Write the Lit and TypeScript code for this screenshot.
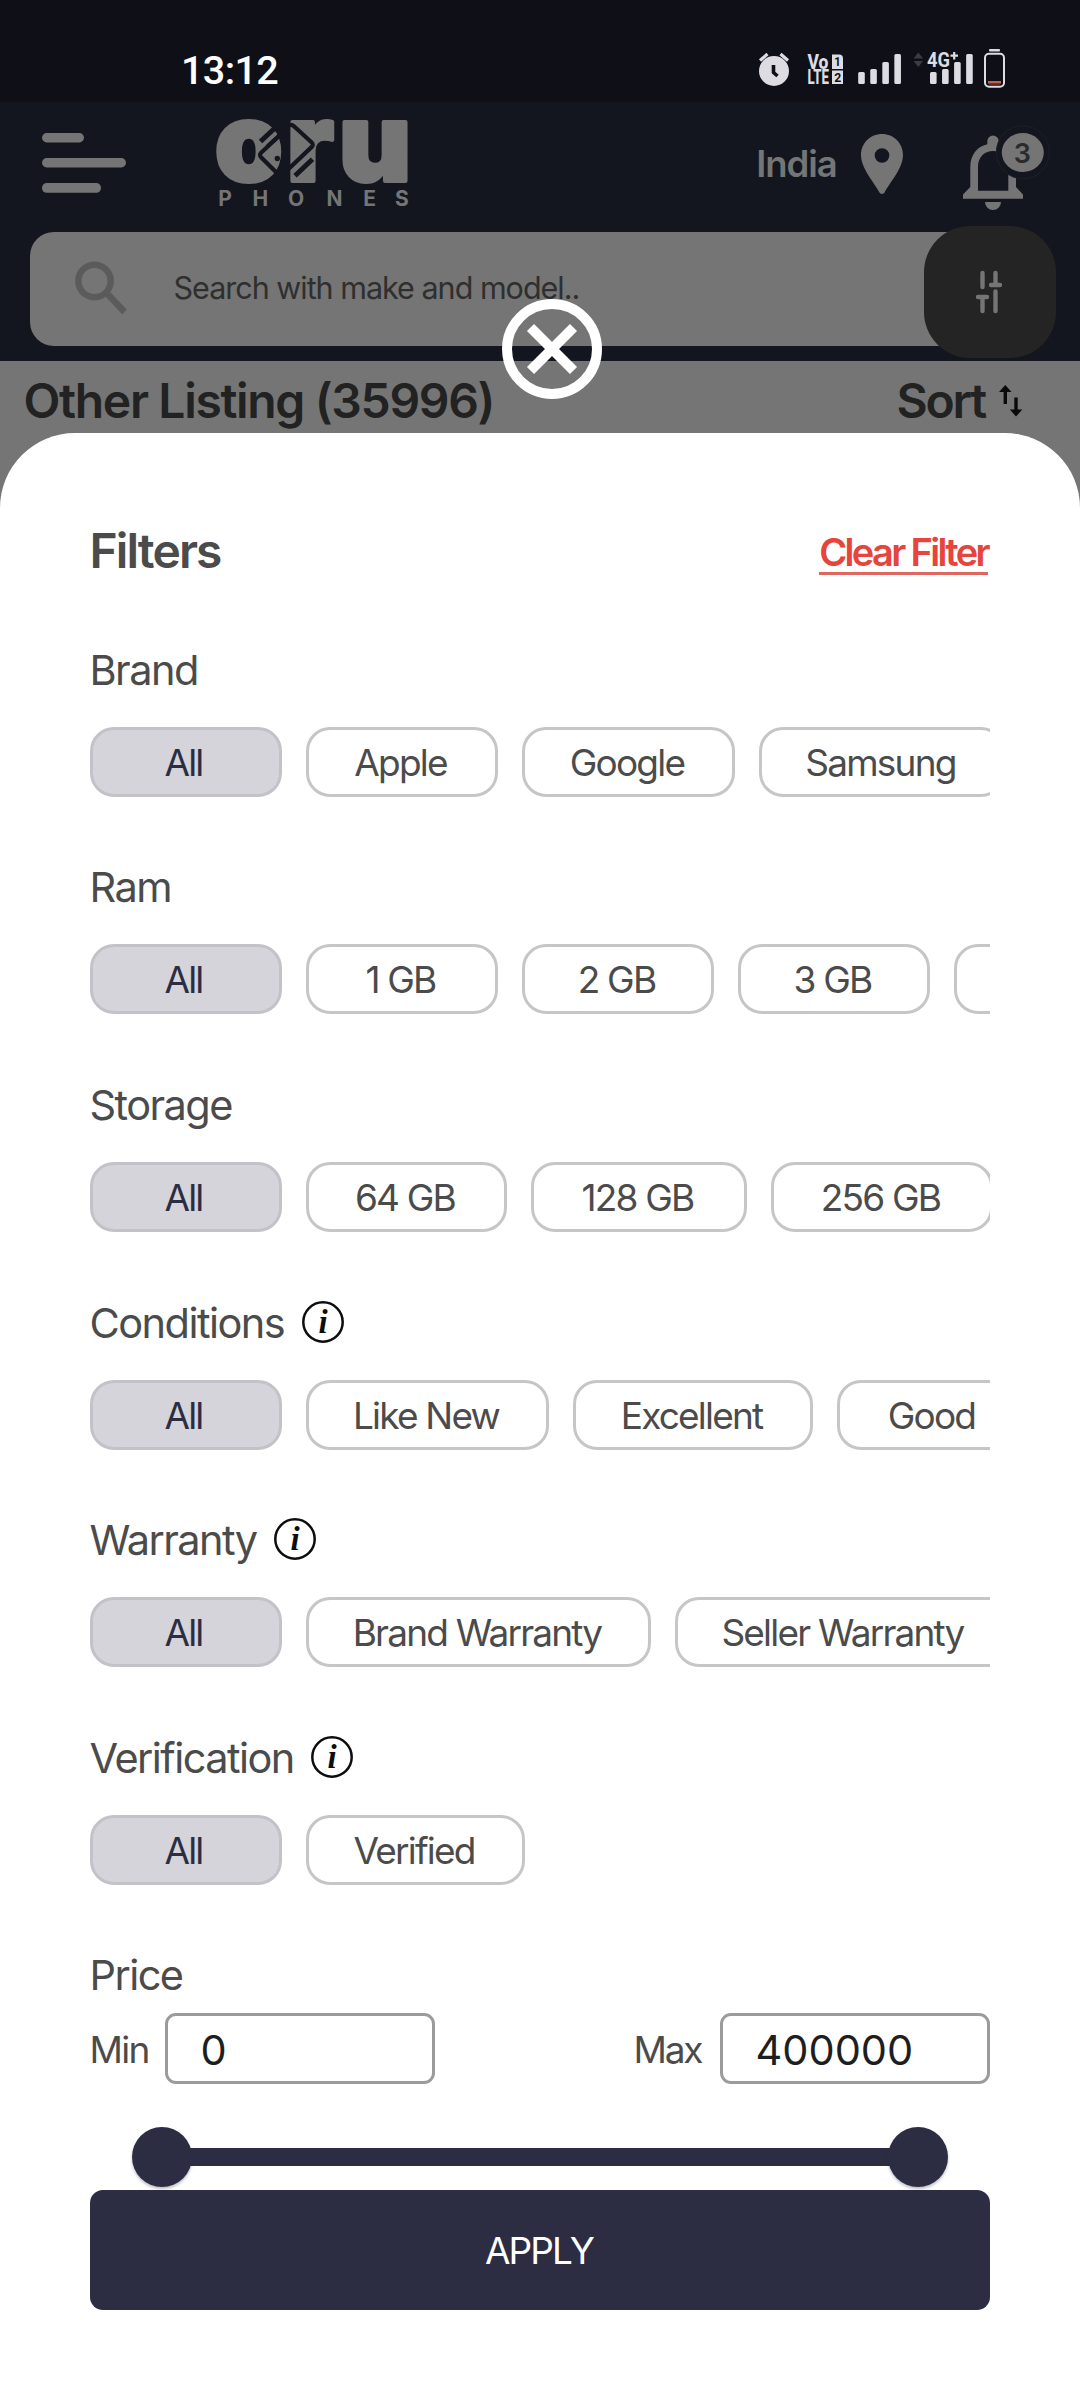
import { LitElement, html, css, svg, nothing } from "lit";
import { classMap } from "lit/directives/class-map.js";
import { styleMap } from "lit/directives/style-map.js";

interface Option {
  text: string;
  width: number;
}

interface FilterGroup {
  title: string;
  info: boolean;
  options: Option[];
}

const opt = (text: string, width = 192): Option => ({ text, width });

const GROUPS: FilterGroup[] = [
  { title: "Brand", info: false, options: [opt("All"), opt("Apple"), opt("Google", 213), opt("Samsung", 246)] },
  { title: "Ram", info: false, options: [opt("All"), opt("1 GB"), opt("2 GB"), opt("3 GB"), opt("")] },
  { title: "Storage", info: false, options: [opt("All"), opt("64 GB", 201), opt("128 GB", 216), opt("256 GB", 222)] },
  { title: "Conditions", info: true, options: [opt("All"), opt("Like New", 243), opt("Excellent", 240), opt("Good")] },
  { title: "Warranty", info: true, options: [opt("All"), opt("Brand Warranty", 345), opt("Seller Warranty", 338)] },
  { title: "Verification", info: true, options: [opt("All"), opt("Verified", 219)] },
];

class StatusBar extends LitElement {
  static styles = css`
    :host {
      display: flex;
      justify-content: space-between;
      height: 102px;
      box-sizing: border-box;
      padding: 46px 72px 0 181px;
      background: #0f1017;
    }
    .time {
      margin-top: 1px;
      font: 500 39.5px/48px Roboto, sans-serif;
      letter-spacing: -0.6px;
      color: #fff;
    }
    .icons { display: block; overflow: visible; }
    .vo { font: 800 20px Roboto, sans-serif; fill: #dcdce2; }
    .sim { font: 700 13px Roboto, sans-serif; fill: #0f1017; }
    .net { font: 700 21px Roboto, sans-serif; fill: #dcdce2; }
  `;

  private bars(x: number) {
    return [72, 69, 62, 54].map(
      (y, i) => svg`<rect x=${x + i * 12.05} y=${y} width="6.6" height=${84 - y} rx="1.5" />`
    );
  }

  render() {
    return html`
      <span class="time">13:12</span>
      <svg class="icons" width="252" height="46" viewBox="756 46 252 46" fill="#dcdce2">
        <circle cx="774" cy="71" r="15" />
        <path d="M760 60.500l7.500-6.500M788 60.500l-7.500-6.500" stroke="#dcdce2" stroke-width="3.200" />
        <path d="M773.500 65v7.500l4 3.500" fill="none" stroke="#0f1017" stroke-width="3.600" />
        <text class="vo" x="807.500" y="68.500" textLength="21" lengthAdjust="spacingAndGlyphs">Vo</text>
        <text class="vo" x="807.500" y="84" textLength="21.500" lengthAdjust="spacingAndGlyphs">LTE</text>
        <path d="M832 54.500h7a4 4 0 0 1 4 4v10.500h-11zM832 70.500h11V84h-11z" />
        <text class="sim" x="834.200" y="66.300" textLength="6.500" lengthAdjust="spacingAndGlyphs">1</text>
        <text class="sim" x="834.200" y="82" textLength="7" lengthAdjust="spacingAndGlyphs">2</text>
        ${this.bars(858.2)} ${this.bars(930)}
        <path d="M913.500 58.500l4.800-6 4.800 6zM913.500 61l4.800 6 4.800-6z" fill="#3b3b40" />
        <text class="net" x="927" y="67" textLength="23" lengthAdjust="spacingAndGlyphs"
          stroke="#0f1017" stroke-width="3" paint-order="stroke">4G</text>
        <path d="M950.500 55.700h7.500M954.200 52v7.500" stroke="#dcdce2" stroke-width="2.200" />
        <rect x="989" y="49" width="11" height="2.400" rx="1" />
        <rect x="985" y="53.800" width="19" height="33" rx="4" fill="none" stroke="#dcdce2" stroke-width="2" />
        <rect x="988" y="81" width="13" height="2.600" fill="#c0604e" />
        <rect x="989" y="83.600" width="11" height="1.400" fill="#5c2a25" />
      </svg>
    `;
  }
}
customElements.define("status-bar", StatusBar);

class AppHeader extends LitElement {
  static styles = css`
    :host {
      display: flex;
      flex-direction: column;
      height: 259px;
      background: #14161f;
      font-family: Inter, sans-serif;
    }
    svg { display: block; flex: none; overflow: visible; }
    .top {
      display: flex;
      height: 124px;
      box-sizing: border-box;
      padding: 0 40px 0 42px;
    }
    .menu { margin: 31px 90px 0 0; }
    .logo { margin-top: 15px; }
    .word { font: 900 108px Inter, sans-serif; }
    .sub { font: 700 21px Inter, sans-serif; }
    .place {
      display: flex;
      align-items: center;
      gap: 24.5px;
      height: 124px;
      margin-left: auto;
      font-size: 36.5px;
      font-weight: 600;
      letter-spacing: -1.1px;
      color: #757575;
    }
    .bell { margin: 20px 0 0 58px; }
    .count { font: 600 27px Inter, sans-serif; }
    .find { display: flex; }
    .box {
      display: flex;
      align-items: center;
      width: 970px;
      height: 114px;
      box-sizing: border-box;
      margin: 6px 0 0 30px;
      padding: 0 0 2px 45px;
      border-radius: 24px;
      background: #757575;
      color: #2f2f2f;
      font-size: 30.5px;
      letter-spacing: -1px;
    }
    .hint { margin: 0 0 1px 46.5px; }
    .tune {
      display: flex;
      align-items: center;
      justify-content: center;
      width: 132px;
      height: 132px;
      box-sizing: border-box;
      padding-right: 3px;
      margin-left: -76px;
      border-radius: 46px;
      background: #242424;
    }
  `;

  render() {
    return html`
      <div class="top">
        <svg class="menu" width="84" height="60" viewBox="0 0 84 60" fill="#757575">
          <rect width="42" height="9.400" rx="4.700" />
          <rect y="25" width="84" height="9.400" rx="4.700" />
          <rect y="50" width="59" height="9.800" rx="4.700" />
        </svg>
        <svg class="logo" width="194" height="91" viewBox="216 117 194 91">
          <g class="word" fill="#757575" stroke="#757575" stroke-width="4" stroke-linejoin="round">
            <text x="215" y="181">o</text>
            <text x="287" y="181">r</text>
            <text x="339" y="181" textLength="72" lengthAdjust="spacingAndGlyphs">u</text>
          </g>
          <rect x="282.300" y="117" width="7.700" height="68" fill="#14161f" />
          <g fill="none" stroke="#14161f">
            <path d="M289 125.500q2.500-1.500 5 .8l17.500 16q2.600 2.400 0 4.800L288 169.500" stroke-width="4.200" />
            <path d="M295 175.700L312.500 159.300" stroke-width="5" />
            <path d="M284 131.500L261.300 152.500q-2.600 2.500 0 5L277.500 173.500" stroke-width="4.200" />
            <path d="M260.500 141.500L284 119.500" stroke-width="5" />
            <path d="M266.500 145.500l13.500-12.500" stroke-width="1.500" />
          </g>
          <circle cx="277.300" cy="158.500" r="2.700" fill="#14161f" />
          <text class="sub" x="218.300 252.400 288 326.400 363.300 395" y="206.200" fill="#757575">PHONES</text>
        </svg>
        <div class="place">
          India
          <svg width="42" height="60" viewBox="0 0 42 60">
            <path fill="#757575" fill-rule="evenodd"
              d="M21 0C9.200 0 0 9.200 0 21c0 13.500 13 27 18.300 37.300 1.200 2.300 4.200 2.300 5.400 0C29 48 42 34.500 42 21 42 9.200 32.800 0 21 0zm0 14.200a7.300 7.300 0 1 1 0 14.600 7.300 7.300 0 0 1 0-14.600z" />
          </svg>
        </div>
        <svg class="bell" width="79" height="92" viewBox="961 122 79 92">
          <path fill="#757575" fill-rule="evenodd"
            d="M963 198.700v-4.200l7.300-7.500v-20c0-11.500 6.700-20.500 17-22.700v-3a5.700 5.700 0 0 1 11.400 0v3c10.300 2.200 17.300 11.200 17.300 22.700v20l7 7.500v4.200zM978 190.800h30.300V167c0-9.500-6-16-15.200-16s-15.100 6.500-15.100 16zM985 202h16a8 8 0 0 1-16 0z" />
          <circle cx="1022.800" cy="152.300" r="26.500" fill="#14161f" stroke="#1d1f29" stroke-width="1" />
          <ellipse cx="1022.800" cy="152.500" rx="21" ry="19.600" fill="#757575" />
          <text class="count" x="1022.300" y="163" text-anchor="middle" fill="#2b2b2e">3</text>
        </svg>
      </div>
      <div class="find">
        <div class="box">
          <svg width="52" height="54" viewBox="0 0 52 54" fill="none" stroke="#5b5b5b">
            <circle cx="19.500" cy="20" r="16.200" stroke-width="6.400" />
            <path d="M33 33.500L49.500 51" stroke-width="6.600" />
          </svg>
          <span class="hint">Search with make and model..</span>
        </div>
        <div class="tune">
          <svg width="28" height="44" viewBox="0 0 28 44" fill="none" stroke="#757575" stroke-width="4.400" stroke-linecap="round">
            <path d="M7.500 3v14M20.500 3v12M16 15h9M3 27h9M7.500 27v14M20.500 21.500V41" />
          </svg>
        </div>
      </div>
    `;
  }
}
customElements.define("app-header", AppHeader);

class FilterSheet extends LitElement {
  static styles = css`
    :host {
      display: flex;
      flex-direction: column;
      flex: 1;
      box-sizing: border-box;
      padding: 88px 90px 0;
      border-radius: 75px 75px 0 0;
      background: #fff;
      color: #4b4b4b;
      font-family: Inter, sans-serif;
    }
    .head {
      display: flex;
      justify-content: space-between;
      align-items: flex-start;
      height: 60px;
      margin-bottom: 59px;
    }
    .heading {
      margin: 0 0 0 -0.5px;
      font-size: 48px;
      font-weight: 600;
      line-height: 60px;
      letter-spacing: -1.9px;
    }
    .clear {
      margin: 11px 2px 0 0;
      border-bottom: 3px solid #e0675f;
      color: #e5453c;
      font-size: 38px;
      font-weight: 600;
      line-height: 40px;
      letter-spacing: -2.65px;
    }
    .group { height: 217.6px; }
    .label {
      display: flex;
      align-items: center;
      gap: 17.5px;
      height: 60px;
      margin-left: -0.5px;
      padding-top: 0.5px;
      box-sizing: border-box;
      font-size: 41.5px;
      letter-spacing: -1.55px;
    }
    .info { display: block; margin-bottom: 2px; }
    .i { font: italic 700 33px "Liberation Serif", serif; letter-spacing: 0; }
    .chips {
      display: flex;
      gap: 24px;
      margin-top: 27.4px;
      overflow: hidden;
    }
    .chip {
      display: flex;
      flex: none;
      align-items: center;
      justify-content: center;
      height: 70px;
      box-sizing: border-box;
      padding: 1px 3px 0 0;
      border: 3px solid #c6c6c6;
      border-radius: 24px;
      font-size: 37px;
      letter-spacing: -1.8px;
    }
    .on {
      padding-right: 5px;
      border-color: #c3c2c8;
      background: #d5d4da;
      color: #2c2d42;
    }
    .price {
      display: grid;
      grid-template-columns: 75px 270px 1fr 85px 270px;
      align-items: center;
      margin-top: 8.4px;
      font-size: 37px;
      letter-spacing: -1.9px;
    }
    .min { margin-left: -0.5px; padding-top: 1px; letter-spacing: -1.7px; }
    .max { grid-column: 4; margin-left: -1.5px; padding-top: 1px; letter-spacing: -2.2px; }
    .field {
      height: 71px;
      box-sizing: border-box;
      padding: 2px 0 0 32.5px;
      border: 3px solid #9b9b9b;
      border-radius: 11px;
      color: #1e1e1e;
      font-size: 41.5px;
      line-height: 65px;
      letter-spacing: 0;
    }
    .slider {
      display: flex;
      align-items: center;
      height: 60px;
      margin: 43px 42px 3px;
    }
    .thumb {
      flex: none;
      width: 60px;
      height: 60px;
      border-radius: 50%;
      background: #2c2d42;
      box-shadow: 0 2px 3px rgba(44, 45, 66, 0.3);
    }
    .track {
      flex: 1;
      height: 18px;
      margin: 0 -4px;
      background: #2c2d42;
    }
    .apply {
      height: 120px;
      box-sizing: border-box;
      padding-right: 2px;
      border-radius: 13px;
      background: #2c2d42;
      color: #fff;
      font-size: 37px;
      line-height: 121px;
      letter-spacing: -1.9px;
      text-align: center;
    }
  `;

  private info() {
    return html`
      <svg class="info" width="42" height="42" viewBox="0 0 42 42">
        <circle cx="21" cy="21" r="19.700" fill="none" stroke="#0d0d0d" stroke-width="2.500" />
        <text class="i" x="21" y="32.300" text-anchor="middle" fill="#0d0d0d">i</text>
      </svg>
    `;
  }

  private group(g: FilterGroup) {
    return html`
      <section class="group">
        <div class="label">${g.title}${g.info ? this.info() : nothing}</div>
        <div class="chips">
          ${g.options.map(
            (o, i) => html`<div class=${classMap({ chip: true, on: i === 0 })} style=${styleMap({ width: `${o.width}px` })}>${o.text}</div>`
          )}
        </div>
      </section>
    `;
  }

  render() {
    return html`
      <div class="head">
        <h2 class="heading">Filters</h2>
        <span class="clear">Clear Filter</span>
      </div>
      ${GROUPS.map((g) => this.group(g))}
      <div class="label">Price</div>
      <div class="price">
        <span class="min">Min</span>
        <div class="field">0</div>
        <span class="max">Max</span>
        <div class="field">400000</div>
      </div>
      <div class="slider">
        <div class="thumb"></div>
        <div class="track"></div>
        <div class="thumb"></div>
      </div>
      <div class="apply">APPLY</div>
    `;
  }
}
customElements.define("filter-sheet", FilterSheet);

class AppRoot extends LitElement {
  static styles = css`
    :host {
      display: flex;
      flex-direction: column;
      position: relative;
      width: 1080px;
      height: 2400px;
      overflow: hidden;
      background: #757575;
      font-family: Inter, sans-serif;
    }
    .listing {
      display: flex;
      justify-content: space-between;
      align-items: center;
      height: 71.5px;
      box-sizing: border-box;
      padding: 8px 57px 0 23.5px;
      color: #222;
      font-size: 48px;
      font-weight: 600;
      letter-spacing: -1.33px;
    }
    .sort {
      display: flex;
      align-items: center;
      gap: 14px;
      letter-spacing: -2.2px;
    }
    .close {
      position: absolute;
      left: 501.7px;
      top: 299px;
    }
  `;

  render() {
    return html`
      <status-bar></status-bar>
      <app-header></app-header>
      <div class="listing">
        <span>Other Listing (35996)</span>
        <span class="sort">
          Sort
          <svg width="24" height="32" viewBox="0 0 24 32" fill="#0a0a0a">
            <path d="M6.300 0L12.500 7H8v12H4.600V7H0zM17 31.500L10.800 24.500h4.500v-12h3.400v12h4.600z" />
          </svg>
        </span>
      </div>
      <filter-sheet></filter-sheet>
      <svg class="close" width="100" height="100" viewBox="0 0 100 100" fill="none" stroke="#fff">
        <circle cx="50" cy="50" r="45" stroke-width="10" />
        <path d="M28.500 28.500l43 43M71.500 28.500l-43 43" stroke-width="10" />
      </svg>
    `;
  }
}
customElements.define("app-root", AppRoot);
